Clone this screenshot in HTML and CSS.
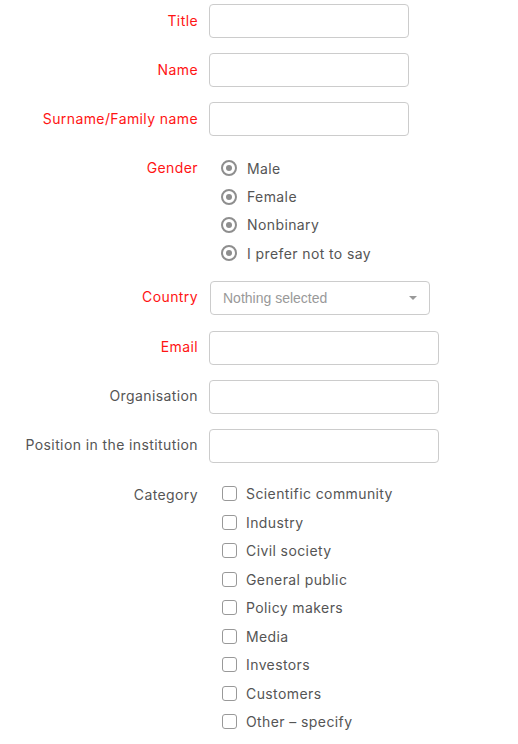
FILE: index.html
```html
<!DOCTYPE html>
<html>
<head>
<meta charset="utf-8">
<link rel="stylesheet" href="styles.css">
</head>
<body>
<form class="form">
  <div class="row">
    <label class="lbl req">Title</label>
    <input class="inp w200" type="text">
  </div>
  <div class="row">
    <label class="lbl req">Name</label>
    <input class="inp w200" type="text">
  </div>
  <div class="row">
    <label class="lbl req">Surname/Family name</label>
    <input class="inp w200" type="text">
  </div>
  <div class="row group gender">
    <span class="lbl req">Gender</span>
    <div class="opts">
      <div class="opt"><span class="radio"></span><span>Male</span></div>
      <div class="opt"><span class="radio"></span><span>Female</span></div>
      <div class="opt"><span class="radio"></span><span>Nonbinary</span></div>
      <div class="opt"><span class="radio"></span><span>I prefer not to say</span></div>
    </div>
  </div>
  <div class="row country">
    <label class="lbl req">Country</label>
    <div class="select"><span class="ph">Nothing selected</span><span class="caret"></span></div>
  </div>
  <div class="row">
    <label class="lbl req">Email</label>
    <input class="inp w230" type="text">
  </div>
  <div class="row">
    <label class="lbl">Organisation</label>
    <input class="inp w230" type="text">
  </div>
  <div class="row">
    <label class="lbl">Position in the institution</label>
    <input class="inp w230" type="text">
  </div>
  <div class="row group category">
    <span class="lbl">Category</span>
    <div class="opts">
      <div class="opt chk"><span class="box"></span><span>Scientific community</span></div>
      <div class="opt chk"><span class="box"></span><span>Industry</span></div>
      <div class="opt chk"><span class="box"></span><span>Civil society</span></div>
      <div class="opt chk"><span class="box"></span><span>General public</span></div>
      <div class="opt chk"><span class="box"></span><span>Policy makers</span></div>
      <div class="opt chk"><span class="box"></span><span>Media</span></div>
      <div class="opt chk"><span class="box"></span><span>Investors</span></div>
      <div class="opt chk"><span class="box"></span><span>Customers</span></div>
      <div class="opt chk"><span class="box"></span><span>Other – specify</span></div>
    </div>
  </div>
</form>
</body>
</html>
```
FILE: styles.css
```css
html, body {
  margin: 0;
  padding: 0;
  background: #fff;
}
body {
  font-family: Inter, "Open Sans", sans-serif;
  font-size: 14px;
  letter-spacing: 0.4px;
  color: #555;
}
.form {
  display: flex;
  flex-direction: column;
  padding-top: 4px;
  margin: 0;
}
.row {
  display: grid;
  grid-template-columns: 198px auto;
  column-gap: 11px;
  align-items: center;
  margin-bottom: 15px;
}
.lbl {
  text-align: right;
  white-space: nowrap;
  color: #555;
  position: relative;
  top: -1px;
}
.lbl.req {
  color: #ff1414;
}
.inp {
  box-sizing: border-box;
  height: 34px;
  border: 1px solid #ccc;
  border-radius: 4px;
  background: #fff;
  margin: 0;
  padding: 0 12px;
  font: inherit;
}
.w200 { width: 200px; }
.w230 { width: 230px; }

.group {
  align-items: start;
}
.group .lbl {
  line-height: 28.4px;
  top: 0;
}
.gender {
  margin-top: 3px;
  margin-bottom: 13px;
}
.gender .opts {
  padding-left: 12px;
}
.category {
  margin-top: 2px;
}
.category .lbl {
  line-height: 30px;
}
.opts {
  display: flex;
  flex-direction: column;
  padding-left: 13px;
}
.opt {
  display: flex;
  align-items: center;
  height: 28.4px;
  gap: 10px;
  white-space: nowrap;
  color: #555;
}
.category .opt {
  height: 28.5px;
}
.opt.chk {
  gap: 9px;
}
.radio {
  box-sizing: border-box;
  width: 16px;
  height: 16px;
  border: 2px solid #8e8e8e;
  border-radius: 50%;
  display: flex;
  align-items: center;
  justify-content: center;
}
.radio::after {
  content: "";
  width: 6px;
  height: 6px;
  border-radius: 50%;
  background: #8e8e8e;
}
.box {
  box-sizing: border-box;
  width: 15px;
  height: 15px;
  border: 1.5px solid #999;
  border-radius: 3px;
  background: #fff;
}
.country {
  margin-bottom: 16px;
}
.select {
  box-sizing: border-box;
  width: 220px;
  height: 34px;
  margin-left: 1px;
  border: 1px solid #ccc;
  border-radius: 4px;
  display: flex;
  align-items: center;
  justify-content: space-between;
  padding: 0 12px 0 12px;
}
.ph {
  font-family: "Liberation Sans", Arial, sans-serif;
  letter-spacing: 0;
  color: #999;
  font-size: 14px;
}
.caret {
  width: 0;
  height: 0;
  border-left: 4px solid transparent;
  border-right: 4px solid transparent;
  border-top: 4px solid #999;
  margin-top: 1px;
}
```
